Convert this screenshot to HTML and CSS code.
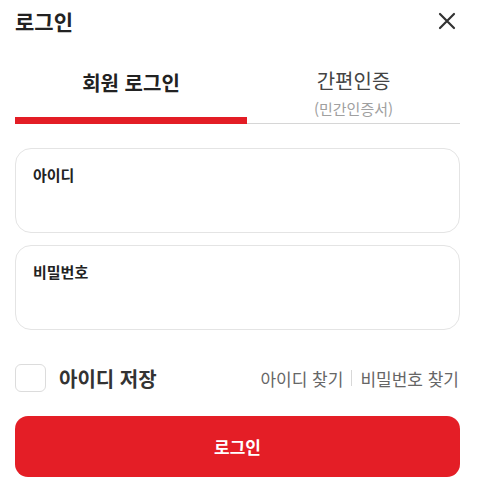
FILE: index.html
```html
<!DOCTYPE html>
<html lang="ko">
<head>
    <meta charset="UTF-8">
    <meta name="viewport" content="width=device-width, initial-scale=1.0">
    <title>로그인</title>
    <link rel="stylesheet" href="styles.css">
</head>
<body>
  <div class="login">
    <div class="header">
      <h1>로그인</h1>
      <button class="close" type="button" aria-label="닫기">
        <svg width="20" height="20" viewBox="0 0 20 20">
          <path d="M3 3 L17 17 M17 3 L3 17" stroke="#333" stroke-width="2.2" stroke-linecap="round" fill="none"/>
        </svg>
      </button>
    </div>

    <div class="tabs">
      <div class="tab active">회원 로그인</div>
      <div class="tab">
        <span class="tab-title">간편인증</span>
        <span class="tab-sub">(민간인증서)</span>
      </div>
    </div>

    <form class="fields">
      <label class="field">
        <span class="field-label">아이디</span>
        <input type="text">
      </label>
      <label class="field">
        <span class="field-label">비밀번호</span>
        <input type="password">
      </label>
    </form>

    <div class="options">
      <label class="save">
        <span class="checkbox"></span>
        아이디 저장
      </label>
      <div class="links">
        <a href="#">아이디 찾기</a>
        <span class="divider"></span>
        <a href="#">비밀번호 찾기</a>
      </div>
    </div>

    <button class="submit" type="button">로그인</button>
  </div>
</body>
</html>
```

FILE: styles.css
```css
body {
    margin: 0;
    background: #fff;
    font-family: "Noto Sans CJK KR", "Noto Sans", sans-serif;
    color: #222;
}

.login {
    padding: 0 17px 0 15px;
}

.header {
    display: flex;
    justify-content: space-between;
    align-items: center;
    height: 42px;
}

h1 {
    margin: 0;
    font-size: 21px;
    font-weight: 700;
    line-height: 26px;
}

.close {
    border: none;
    background: none;
    padding: 0;
    margin-right: 3px;
    width: 20px;
    height: 20px;
    cursor: pointer;
}

.tabs {
    display: flex;
    align-items: flex-end;
    margin-top: 27px;
}

.tab {
    flex: 1;
    display: flex;
    flex-direction: column;
    align-items: center;
    padding-bottom: 5px;
    border-bottom: 1px solid #d6d6d6;
    color: #444;
}

.tab.active {
    flex: 0 0 232px;
    font-size: 20px;
    font-weight: 700;
    line-height: 24px;
    color: #222;
    padding-bottom: 22px;
    border-bottom: 7px solid #e31d25;
}

.tab-title {
    font-size: 20px;
    line-height: 24px;
}

.tab-sub {
    margin-top: 7px;
    font-size: 15px;
    line-height: 18px;
    color: #a0a0a0;
}

.fields {
    margin: 24px 0 0;
    display: flex;
    flex-direction: column;
    gap: 12px;
}

.field {
    display: flex;
    flex-direction: column;
    height: 85px;
    box-sizing: border-box;
    border: 1px solid #e4e4e4;
    border-radius: 16px;
    padding: 16px 17px 0;
}

.field-label {
    font-size: 15px;
    font-weight: 700;
    line-height: 20px;
    color: #222;
}

.field input {
    border: none;
    outline: none;
    padding: 0;
    margin-top: 8px;
    font-size: 15px;
    background: transparent;
}

.options {
    display: flex;
    justify-content: space-between;
    align-items: center;
    height: 40px;
    margin-top: 28px;
}

.save {
    display: flex;
    align-items: center;
    gap: 13px;
    font-size: 20px;
    font-weight: 700;
    color: #333;
}

.checkbox {
    width: 31px;
    height: 28px;
    box-sizing: border-box;
    border: 1.5px solid #dcdcdc;
    border-radius: 6px;
}

.links {
    display: flex;
    align-items: center;
    gap: 8px;
    font-size: 17px;
    margin-right: 1px;
}

.links a {
    color: #666;
    text-decoration: none;
}

.divider {
    width: 1px;
    height: 16px;
    background: #d8d8d8;
}

.submit {
    display: block;
    width: 100%;
    height: 61px;
    margin-top: 18px;
    border: none;
    border-radius: 13px;
    background: #e41e26;
    color: #fff;
    font-family: inherit;
    font-size: 17px;
    font-weight: 700;
    cursor: pointer;
}
```
